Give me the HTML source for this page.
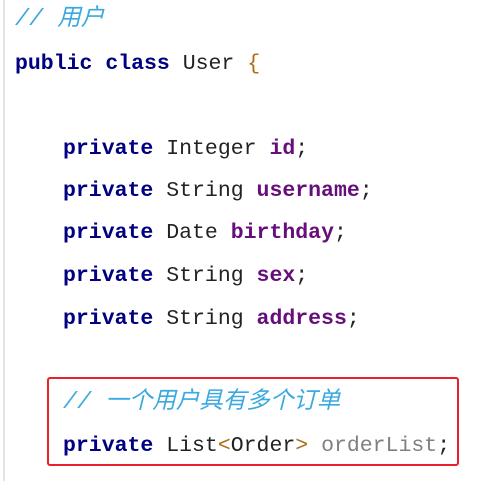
<!DOCTYPE html>
<html><head><meta charset="utf-8"><style>
html,body{margin:0;padding:0;background:#fff;width:489px;height:481px;overflow:hidden}
.bar{position:absolute;left:3px;top:0;width:2px;height:481px;background:#e4e4e4}
.l{position:absolute;white-space:pre;font-family:"Liberation Mono","Noto Sans CJK SC",monospace;font-size:21.5px;line-height:26px;color:#222}
.k{color:#000080;font-weight:bold}
.f{color:#660e7a;font-weight:bold}
.c{color:#3aa9e0;font-style:italic;font-size:23.5px;line-height:28px}
.p{color:#b06a10}
.g{color:#808080}
.box{position:absolute;left:47px;top:377px;width:408px;height:85px;border:2.5px solid #e8202a;border-radius:3px}
</style></head><body>
<div class="bar"></div>
<div class="l c" style="left:15px;top:6px">// 用户</div>
<div class="l" style="left:15px;top:51px"><span class="k">public class</span> User <span class="p">{</span></div>
<div class="l" style="left:63px;top:136px"><span class="k">private</span> Integer <span class="f">id</span>;</div>
<div class="l" style="left:63px;top:178px"><span class="k">private</span> String <span class="f">username</span>;</div>
<div class="l" style="left:63px;top:220px"><span class="k">private</span> Date <span class="f">birthday</span>;</div>
<div class="l" style="left:63px;top:263px"><span class="k">private</span> String <span class="f">sex</span>;</div>
<div class="l" style="left:63px;top:306px"><span class="k">private</span> String <span class="f">address</span>;</div>
<div class="box"></div>
<div class="l c" style="left:63px;top:389px">// 一个用户具有多个订单</div>
<div class="l" style="left:63px;top:433px"><span class="k">private</span> List<span class="p">&lt;</span>Order<span class="p">&gt;</span> <span class="g">orderList</span>;</div>
</body></html>
